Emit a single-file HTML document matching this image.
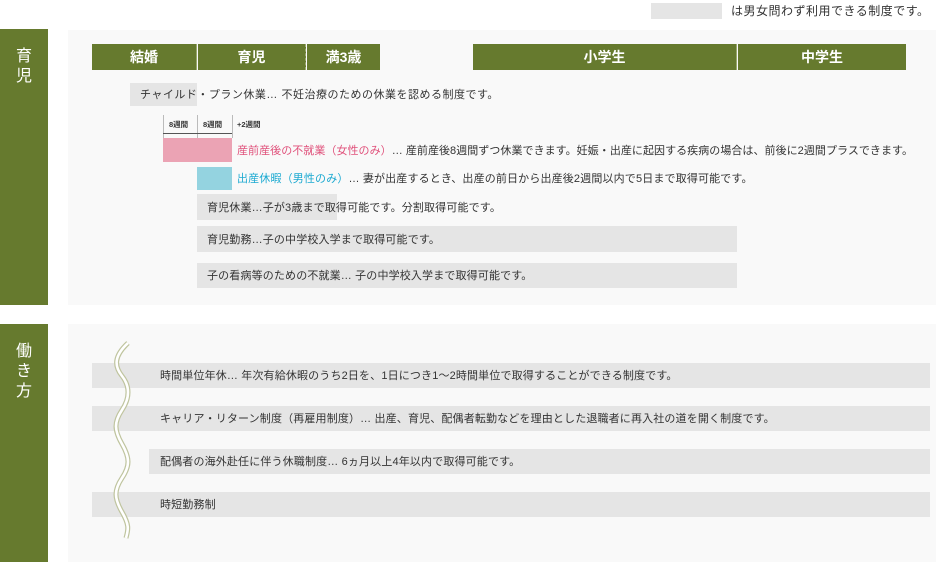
<!DOCTYPE html>
<html><head><meta charset="utf-8"><style>
*{margin:0;padding:0;box-sizing:border-box}
body{width:936px;height:562px;background:#fff;position:relative;overflow:hidden;font-family:"Liberation Sans","Noto Sans CJK JP",sans-serif;color:#333}
.a{position:absolute}
.green{background:#667a2e}
.side{left:0;width:48px;color:#fff;font-size:16px;line-height:20px;text-align:center;padding-top:18px}
.panel{left:68px;width:868px;background:#f9f9f9}
.hb{color:#fff;font-weight:bold;font-size:14px;line-height:26px;text-align:center;top:44px;height:26px}
.g{background:#e5e5e5}
.t{font-size:11px;line-height:14px;white-space:nowrap;color:#333;letter-spacing:0.15px}
.s{font-size:7.5px;font-weight:bold;white-space:nowrap}
</style></head><body>
<div class="a g" style="left:651px;top:3px;width:71px;height:16px"></div>
<div class="a t" style="left:731px;top:4px;font-size:12px;letter-spacing:0.5px">は男女問わず利用できる制度です。</div>

<div class="a green side" style="top:29px;height:276px">育<br>児</div>
<div class="a green side" style="top:324px;height:238px">働<br>き<br>方</div>
<div class="a panel" style="top:30px;height:275px"></div>
<div class="a panel" style="top:324px;height:238px"></div>

<div class="a green hb" style="left:92px;width:105px;border-right:1px solid #9aa86d">結婚</div>
<div class="a green hb" style="left:198px;width:108px;border-right:1px dashed #9aa86d">育児</div>
<div class="a green hb" style="left:307px;width:73px">満3歳</div>
<div class="a green hb" style="left:473px;width:264px;border-right:1px solid #9aa86d">小学生</div>
<div class="a green hb" style="left:738px;width:168px">中学生</div>

<div class="a g" style="left:130px;top:83px;width:67px;height:23px"></div>
<div class="a t" style="left:140px;top:88px;letter-spacing:0.5px">チャイルド・プラン休業… 不妊治療のための休業を認める制度です。</div>

<div class="a" style="left:163px;top:115px;width:1px;height:23px;background:#bbb"></div>
<div class="a" style="left:197px;top:115px;width:1px;height:23px;background:#bbb"></div>
<div class="a" style="left:232px;top:115px;width:1px;height:23px;background:#bbb"></div>
<div class="a" style="left:163px;top:133px;width:69px;height:1px;background:#555"></div>
<div class="a s" style="left:169px;top:119px">8週間</div>
<div class="a s" style="left:203px;top:119px">8週間</div>
<div class="a s" style="left:237px;top:119px">+2週間</div>

<div class="a" style="left:163px;top:138px;width:69px;height:24px;background:#eba3b4"></div>
<div class="a t" style="left:237px;top:144px;letter-spacing:0.05px"><span style="color:#e0517b">産前産後の不就業（女性のみ）</span>… 産前産後8週間ずつ休業できます。妊娠・出産に起因する疾病の場合は、前後に2週間プラスできます。</div>
<div class="a" style="left:197px;top:167px;width:35px;height:23px;background:#94d3e0"></div>
<div class="a t" style="left:237px;top:172px"><span style="color:#1ba9d1">出産休暇（男性のみ）</span>… 妻が出産するとき、出産の前日から出産後2週間以内で5日まで取得可能です。</div>

<div class="a g" style="left:197px;top:194px;width:140px;height:26px"></div>
<div class="a t" style="left:207px;top:201px">育児休業…子が3歳まで取得可能です。分割取得可能です。</div>
<div class="a g" style="left:197px;top:226px;width:540px;height:26px"></div>
<div class="a t" style="left:207px;top:233px">育児勤務…子の中学校入学まで取得可能です。</div>
<div class="a g" style="left:197px;top:263px;width:540px;height:25px"></div>
<div class="a t" style="left:207px;top:269px">子の看病等のための不就業… 子の中学校入学まで取得可能です。</div>

<div class="a g" style="left:92px;top:363px;width:838px;height:25px"></div>
<div class="a t" style="left:160px;top:369px">時間単位年休… 年次有給休暇のうち2日を、1日につき1～2時間単位で取得することができる制度です。</div>
<div class="a g" style="left:92px;top:406px;width:838px;height:25px"></div>
<div class="a t" style="left:160px;top:412px">キャリア・リターン制度（再雇用制度）… 出産、育児、配偶者転勤などを理由とした退職者に再入社の道を開く制度です。</div>
<div class="a g" style="left:149px;top:449px;width:781px;height:25px"></div>
<div class="a t" style="left:160px;top:455px">配偶者の海外赴任に伴う休職制度… 6ヵ月以上4年以内で取得可能です。</div>
<div class="a g" style="left:92px;top:492px;width:838px;height:25px"></div>
<div class="a t" style="left:160px;top:498px">時短勤務制</div>

<svg class="a" style="left:100px;top:340px" width="50" height="200">
<path d="M28 3 C14 16,14 26,22 36 S30 58,22 70 S14 90,22 104 S30 126,22 138 S14 158,22 172 S28 190,26 198" fill="none" stroke="#bfc49e" stroke-width="5"/>
<path d="M28 3 C14 16,14 26,22 36 S30 58,22 70 S14 90,22 104 S30 126,22 138 S14 158,22 172 S28 190,26 198" fill="none" stroke="#fff" stroke-width="2.6"/>
</svg>
</body></html>
